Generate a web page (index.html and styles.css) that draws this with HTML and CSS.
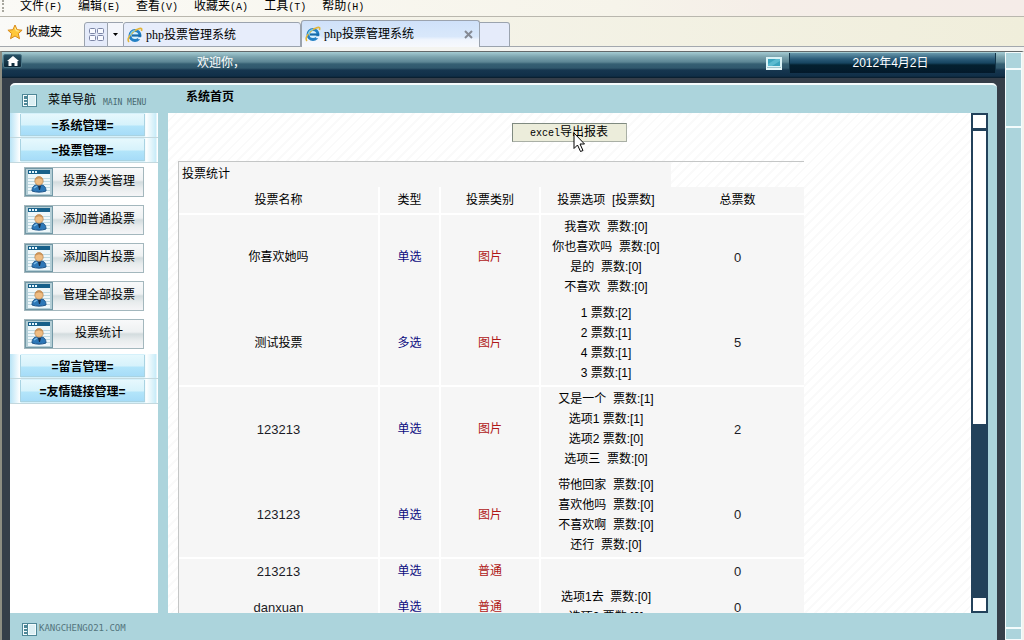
FILE: index.html
```html
<!DOCTYPE html>
<html lang="zh-CN">
<head>
<meta charset="utf-8">
<title>php投票管理系统</title>
<link rel="stylesheet" href="styles.css">
</head>
<body>
<svg class="defs" aria-hidden="true">
  <symbol id="ie" viewBox="0 0 16 16">
    <circle cx="8" cy="8.500" r="5" fill="#d8f2ff" stroke="#2380c4" stroke-width="3"/>
    <path d="M5 8.500h9" stroke="#176baa" stroke-width="2.200"/>
    <path d="M10.500 10.200h5v2h-4z" fill="#eef6ff"/>
    <path d="M2 15C-1 12 5 4 11 2c4-1.500 4 0 3.500 2" fill="none" stroke="#e2b63a" stroke-width="1.600"/>
    <path d="M3.500 8a5 5 0 0 1 4.500-4.400" fill="none" stroke="#74cdf2" stroke-width="1.400"/>
  </symbol>
  <symbol id="layout" viewBox="0 0 15 13">
    <rect x=".5" y=".5" width="14" height="12" fill="#f4fbfc" stroke="#4f8797"/>
    <path d="M5.500 1v11" stroke="#4f8797"/>
    <path d="M2 2h3v3H2zM2 6h3v2H2zM2 9h3v2H2z" fill="#4f8797"/>
    <path d="M7 2h6v9H7z" fill="#dceff3"/>
  </symbol>
  <symbol id="user" viewBox="0 0 28 28">
    <rect x=".5" y=".5" width="27" height="27" fill="#b4ced6" stroke="#7298a6"/>
    <path d="M3 6h22v20H3z" fill="#eef7fa"/>
    <path d="M3 10.500h22M3 13.500h22M3 16.500h22M3 19.500h22M3 22.500h22" stroke="#bdd8e1"/>
    <path d="M3 2h22v4H3z" fill="#17608a"/>
    <path d="M4 3h2v2H4zM7 3h2v2H7zM10 3h2v2h-2z" fill="#e6f7ff"/>
    <path d="M7 23c0-4 2-6 5-6h4c3 0 5 2 5 6-4 1.500-10 1.500-14 0z" fill="#2d78b8" stroke="#1d5388"/>
    <path d="M9 20l3-2" stroke="#7fbce5" stroke-width="1.500"/>
    <path d="M13 18h3l-1 4h-1z" fill="#17304c"/>
    <circle cx="14" cy="13" r="4.200" fill="#efbd83" stroke="#a87643" stroke-width=".6"/>
    <path d="M10 12c0-5 8-5 8 0-3-2-5-2-8 0z" fill="#c9935a"/>
  </symbol>
</svg>

<nav class="menubar">
  <span class="grip" aria-hidden="true"></span>
  <a href="#">文件<span class="mono">(F)</span></a>
  <a href="#">编辑<span class="mono">(E)</span></a>
  <a href="#">查看<span class="mono">(V)</span></a>
  <a href="#">收藏夹<span class="mono">(A)</span></a>
  <a href="#">工具<span class="mono">(T)</span></a>
  <a href="#">帮助<span class="mono">(H)</span></a>
</nav>

<div class="tabbar">
  <button class="fav" type="button">
    <svg width="16" height="16" viewBox="0 0 16 16"><path d="M8 1l2.100 4.700 5 .5-3.800 3.400 1.200 5.100L8 12l-4.500 2.700 1.200-5.100L.9 6.200l5-.5z" fill="#ffc83a" stroke="#d98a1a"/><path d="M8 3.500l1.200 3.200 2.600.4" fill="none" stroke="#fff0a0"/></svg>
    收藏夹
  </button>
  <button class="quick" type="button" aria-label="快速导航选项卡">
    <svg width="17" height="15" viewBox="0 0 17 15" fill="#f8faff" stroke="#7c86a6"><rect x="1.500" y="1.500" width="6" height="5" rx="1"/><rect x="9.500" y="1.500" width="6" height="5" rx="1"/><rect x="1.500" y="8.500" width="6" height="5" rx="1"/><rect x="9.500" y="8.500" width="6" height="5" rx="1"/></svg>
  </button>
  <button class="drop" type="button" aria-label="选项卡列表"><svg width="5" height="3" viewBox="0 0 5 3"><path d="M0 0h5L2.500 3z"/></svg></button>
  <button class="tab" type="button"><svg width="16" height="16"><use href="#ie"/></svg><span><span class="serif">php</span>投票管理系统</span></button>
  <div class="tab active">
    <svg width="16" height="16"><use href="#ie"/></svg><span><span class="serif">php</span>投票管理系统</span>
    <button class="close" type="button" aria-label="关闭"><svg width="9" height="9" viewBox="0 0 9 9"><path d="M1 1l7 7M8 1L1 8" stroke="#858a94" stroke-width="2"/></svg></button>
  </div>
  <button class="newtab" type="button" aria-label="新选项卡"></button>
</div>

<div class="window">
  <div class="site">
    <header class="topbar">
      <a class="home" href="#" aria-label="首页"><svg width="12" height="10" viewBox="0 0 12 10"><path d="M6 0l6 5h-1.500v5H7.500V7h-3v3h-3V5H0z" fill="#fff"/></svg></a>
      <span class="welcome">欢迎你，</span>
      <svg class="screen" width="16" height="13" viewBox="0 0 16 13"><path d="M0 0h16v10H0z" fill="#d9f2f6"/><path d="M2 2h12v7H2z" fill="#3ba4bd"/><path d="M2 7l8-5h4v2l-8 5H2z" fill="#5bbbd0"/><path d="M0 10h16v3H0z" fill="#e6f6f8"/><path d="M1 10.500h14" stroke="#9fc4cc"/></svg>
      <time class="date">2012年4月2日</time>
    </header>

    <div class="panel">
      <div class="columns">
        <aside class="sidebar">
          <div class="side-title"><svg width="15" height="13"><use href="#layout"/></svg><span>菜单导航</span><span class="pixel">MAIN MENU</span></div>
          <nav class="side-body">
            <button class="group" type="button"><span>=系统管理=</span></button>
            <button class="group" type="button"><span>=投票管理=</span></button>
            <div class="items">
              <a class="item" href="#"><svg width="28" height="28"><use href="#user"/></svg><span>投票分类管理</span></a>
              <a class="item" href="#"><svg width="28" height="28"><use href="#user"/></svg><span>添加普通投票</span></a>
              <a class="item" href="#"><svg width="28" height="28"><use href="#user"/></svg><span>添加图片投票</span></a>
              <a class="item" href="#"><svg width="28" height="28"><use href="#user"/></svg><span>管理全部投票</span></a>
              <a class="item" href="#"><svg width="28" height="28"><use href="#user"/></svg><span>投票统计</span></a>
            </div>
            <button class="group" type="button"><span>=留言管理=</span></button>
            <button class="group" type="button"><span>=友情链接管理=</span></button>
          </nav>
        </aside>

        <section class="main">
          <h1>系统首页</h1>
          <div class="view">
            <div class="content">
              <div class="actions">
                <button class="export" type="button"><span class="mono">excel</span>导出报表</button>
                <svg class="pointer" width="13" height="21" viewBox="0 0 13 21"><path d="M1 1v15.500l3.500-3.500 3 6.500 2.500-1-3-6.500h4.500z" fill="#fff" stroke="#000"/></svg>
              </div>
              <table>
                <colgroup><col class="c-name"><col class="c-type"><col class="c-kind"><col class="c-opts"><col></colgroup>
                <thead>
                  <tr class="title"><th colspan="4">投票统计</th><td></td></tr>
                  <tr class="head"><th>投票名称</th><th>类型</th><th>投票类别</th><th>投票选项&nbsp; [投票数]</th><th>总票数</th></tr>
                </thead>
                <tbody>
                  <tr><td>你喜欢她吗</td><td class="blue">单选</td><td class="red">图片</td><td>我喜欢&nbsp; 票数:[0]<br>你也喜欢吗&nbsp; 票数:[0]<br>是的&nbsp; 票数:[0]<br>不喜欢&nbsp; 票数:[0]</td><td class="num">0</td></tr>
                  <tr class="rule"><td>测试投票</td><td class="blue">多选</td><td class="red">图片</td><td>1 票数:[2]<br>2 票数:[1]<br>4 票数:[1]<br>3 票数:[1]</td><td class="num">5</td></tr>
                  <tr><td class="num">123213</td><td class="blue">单选</td><td class="red">图片</td><td>又是一个&nbsp; 票数:[1]<br>选项1 票数:[1]<br>选项2 票数:[0]<br>选项三&nbsp; 票数:[0]</td><td class="num">2</td></tr>
                  <tr class="rule"><td class="num">123123</td><td class="blue">单选</td><td class="red">图片</td><td>带他回家&nbsp; 票数:[0]<br>喜欢他吗&nbsp; 票数:[0]<br>不喜欢啊&nbsp; 票数:[0]<br>还行&nbsp; 票数:[0]</td><td class="num">0</td></tr>
                  <tr><td class="num">213213</td><td class="blue">单选</td><td class="red">普通</td><td></td><td class="num">0</td></tr>
                  <tr><td class="num">danxuan</td><td class="blue">单选</td><td class="red">普通</td><td>选项1去&nbsp; 票数:[0]<br>选项2 票数:[0]</td><td class="num">0</td></tr>
                </tbody>
              </table>
            </div>
            <div class="bar" aria-hidden="true"><i class="end"></i><i class="thumb"></i><i class="track"></i><i class="end"></i></div>
          </div>
        </section>
      </div>
      <footer><svg width="15" height="13"><use href="#layout"/></svg><span>KANGCHENGO21.COM</span></footer>
    </div>
  </div>
  <div class="outer-bar" aria-hidden="true"><i class="up"></i><i class="gap"></i><i class="long"></i><i class="down"></i></div>
</div>
</body>
</html>
```
FILE: styles.css
```css
* { box-sizing: border-box; }
body {
  margin: 0;
  height: 100vh;
  display: flex;
  flex-direction: column;
  overflow: hidden;
  background: #f4f4f0;
  color: #000;
  font: 12px/20px "Liberation Sans", "Noto Sans CJK SC", sans-serif;
}
button { font: inherit; color: inherit; border: 0; padding: 0; margin: 0; background: none; }
a { color: inherit; text-decoration: none; }
svg { flex: none; display: block; }
.defs { position: absolute; width: 0; height: 0; }
.mono { font-family: "Liberation Mono", monospace; font-size: 10px; }
.serif { font-family: "Liberation Serif", serif; font-size: 12px; }

/* Browser chrome */
.menubar {
  flex: none;
  display: flex;
  gap: 16px;
  height: 17px;
  line-height: 12px;
  background: linear-gradient(90deg, #fbfaf6 0%, #f6f4ea 60%, #f5eee8 75%, #f5ece8);
  border-bottom: 1px solid #b9b7ae;
}
.grip { width: 4px; border-right: 2px dotted #a8a79f; height: 12px; }
.tabbar {
  flex: none;
  display: flex;
  align-items: flex-end;
  height: 30px;
  background: linear-gradient(90deg, #fafaf8, #f6f5ee 20%, #f0eedb);
  box-shadow: inset 0 -1px #a3a8ae;
}
.fav { display: flex; align-items: center; gap: 3px; width: 84px; height: 30px; padding-left: 7px; }
.quick, .drop, .tab, .newtab {
  display: flex;
  align-items: center;
  height: 25px;
  background: #e5ebfa;
  border: 1px solid #9ba3ae;
}
.quick { width: 24px; justify-content: center; border-radius: 3px 0 0; }
.drop { width: 15px; justify-content: center; border-left: 0; border-right: 0; background: #f4f6fb; }
.tab { width: 178px; padding-left: 3px; gap: 3px; border-radius: 3px 3px 0 0; background: #e7edfb; }
.tab.active {
  height: 27px;
  width: 179px;
  padding-right: 6px;
  background: linear-gradient(#cfe1f9 0%, #d9e8fb 60%, #f0f5fd 72%, #f7f9fd);
  border-bottom: 0;
}
.close { margin-left: auto; }
.newtab { width: 30px; border-left: 0; border-radius: 0 3px 0 0; }

/* Page frame */
.window {
  flex: 1;
  min-height: 0;
  display: flex;
  margin-top: 4px;
  border-left: 2px solid #8d8d82;
  border-right: 2px solid #f3f3ee;
  border-top: 1px solid #63696a;
  background: #353e49;
}
.site { flex: 1; min-width: 0; display: flex; flex-direction: column; }
.topbar {
  flex: none;
  display: flex;
  align-items: center;
  height: 26px;
  color: #fff;
  background: linear-gradient(#a5ccd3 0, #7aa2ad 5px, #5d8694 10px, #355f72 12px, #30586c 16px, #16364f 18px, #102f48 24px, #081b29 26px);
}
.home {
  display: grid;
  place-items: center;
  width: 19px;
  height: 14px;
  margin: 0 0 8px 1px;
  background: linear-gradient(#275064, #0b2535);
  border: 1px solid #4a7586;
  border-radius: 2px;
}
.welcome { margin-left: 175px; padding-bottom: 4px; }
.screen { margin: 0 7px 4px auto; }
.date {
  width: 207px;
  height: 20px;
  margin: 0 9px 4px 0;
  text-align: center;
  padding-right: 4px;
  background: linear-gradient(#6898ac 0, #2b5b78 6px, #174560 10px, #04202f 12px, #03192a);
  border-left: 1px solid #123549;
  border-right: 1px solid #123549;
}
.panel {
  flex: 1;
  min-height: 0;
  display: flex;
  flex-direction: column;
  margin: 5px 8px 0;
  background: #acd4dc;
  border-top: 2px solid #f6fcfd;
  border-radius: 5px 5px 0 0;
}
.columns { flex: 1; min-height: 0; display: flex; gap: 10px; }
footer {
  flex: none;
  display: flex;
  align-items: center;
  gap: 2px;
  height: 27px;
  padding: 5px 12px 0;
  color: #54757d;
  font: 9px/12px "DejaVu Sans Mono", monospace;
}
footer span { padding-bottom: 3px; }

/* Sidebar */
.sidebar { flex: none; width: 148px; display: flex; flex-direction: column; }
.side-title { flex: none; display: flex; align-items: center; gap: 11px; height: 28px; padding: 2px 0 0 12px; white-space: nowrap; }
.pixel { font: 8px/12px "DejaVu Sans Mono", monospace; color: #476970; padding-top: 5px; margin-left: -4px; }
.side-body { flex: 1; min-height: 0; background: #fff; }
.group {
  display: block;
  width: 100%;
  height: 25px;
  padding: 1px 13px 1px 10px;
  background: linear-gradient(90deg, #b9e4f6, #fff 10px, #d5f1fb 11px, #d5f1fb 134px, #fff 136px, #c8ecf8 146px, #fff 147px);
  border-bottom: 1px solid #c3d8de;
  font-weight: bold;
}
.group span {
  display: block;
  height: 22px;
  line-height: 24px;
  text-align: center;
  background: linear-gradient(#e6f8fd 0, #d6f2fb 11px, #b3e5fa 12px, #a6dcf8);
  border: 1px solid #a9d3e2;
  border-width: 0 1px 1px;
}
.items { display: flex; flex-direction: column; gap: 8px; padding: 4px 14px 5px; }
.item {
  display: flex;
  height: 30px;
  line-height: 26px;
  border: 1px solid #a3b7bd;
  background: linear-gradient(#f8f9fa 0, #eef1f2 12px, #d3dcde 14px, #e8eced 20px, #f5f5f7);
}
.item span { flex: 1; text-align: center; padding-left: 2px; }

/* Main area */
.main { flex: 1; min-width: 0; display: flex; flex-direction: column; padding-right: 9px; }
h1 { flex: none; margin: 0; height: 28px; padding: 0 18px; font-size: 12px; line-height: 24px; }
.view { flex: 1; min-height: 0; display: flex; }
.content {
  flex: 1;
  min-width: 0;
  overflow: hidden;
  padding: 10px;
  background: repeating-linear-gradient(135deg, #fff 0 5px, #fafafa 5px 7px);
}
.actions { position: relative; width: 782px; max-width: 100%; height: 38px; text-align: center; }
.export {
  display: block;
  width: 115px;
  height: 19px;
  margin: 0 auto;
  line-height: 15px;
  background: #eceddb;
  border: 1px solid #7f8a80;
  border-right-color: #a9afa5;
  border-bottom-color: #a9afa5;
}
.pointer { position: absolute; left: 50%; top: 9px; margin-left: 4px; }
table {
  width: 626px;
  max-width: 100%;
  table-layout: fixed;
  border-spacing: 0;
  border-top: 1px solid #c4c6c6;
  border-left: 1px solid #c4c6c6;
  text-align: center;
}
.c-name { width: 201px; }
.c-type { width: 61px; }
.c-kind { width: 100px; }
.c-opts { width: 130px; }
th, td { padding: 2px 0 4px; background: #f6f6f6; border-right: 2px solid #fff; font-weight: normal; }
tbody td { height: 26px; }
td:nth-child(n+4), th:nth-child(n+4), .title th, .title td { border-right: 0; }
.title th { padding: 2px 3px 3px; text-align: left; }
.title td { background: none; }
.head th { height: 28px; border-bottom: 2px solid #fff; padding: 3px 0; }
.rule td { border-bottom: 2px solid #fff; padding-bottom: 2px; }
td.blue { color: #0c0c80; }
td.red { color: #b01818; }
td.num { color: #1c1c26; font-size: 13px; padding: 2px 0; }

/* Scroll bars */
.bar { flex: none; width: 17px; display: flex; flex-direction: column; background: #22415a; padding: 2px; gap: 3px; }
.bar i { background: #fff; }
.end { height: 13px; }
.thumb { flex: 294; }
.bar .track { flex: 169; background: none; }
.outer-bar { flex: none; width: 17px; display: flex; flex-direction: column; background: #acd4dc; }
.outer-bar i { border: 1px solid #f3fbfc; }
.up { height: 17px; }
.gap { height: 58px; }
.long { flex: 1; }
.down { height: 12px; }
```
